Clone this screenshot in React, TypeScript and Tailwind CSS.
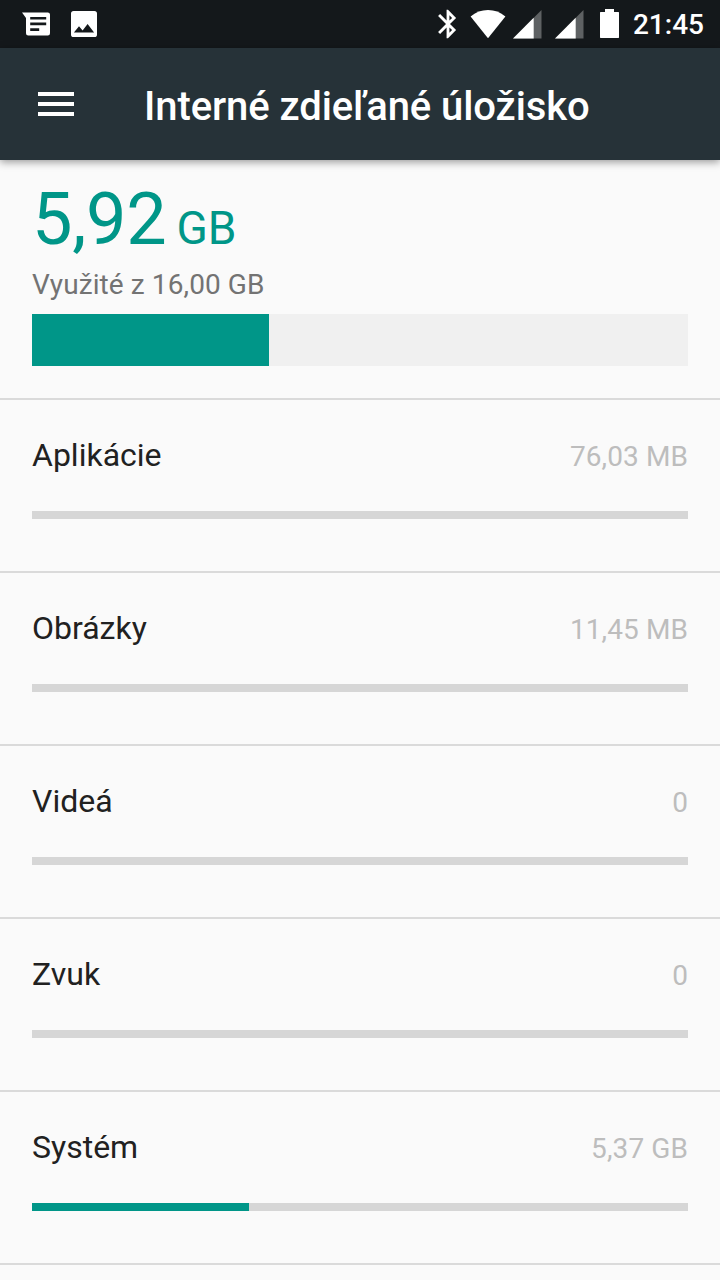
interface StorageItem {
  name: string;
  size: string;
  percent: number;
}

const storageItems: StorageItem[] = [
  { name: 'Aplikácie', size: '76,03 MB', percent: 0 },
  { name: 'Obrázky', size: '11,45 MB', percent: 0 },
  { name: 'Videá', size: '0', percent: 0 },
  { name: 'Zvuk', size: '0', percent: 0 },
  { name: 'Systém', size: '5,37 GB', percent: 33.1 },
];

function MessageIcon() {
  return (
    <svg width="28" height="24" viewBox="0 0 28 24" className="mt-3 shrink-0">
      <path
        fill="#fff"
        fillRule="evenodd"
        d="M0 .6h25.6A2.3 2.3 0 0 1 28 3v18.2a2.3 2.3 0 0 1-2.4 2.3H6.4A2.3 2.3 0 0 1 4 21.2V6zM8.200 4.900v2.700h16V4.900zM8.200 10.600v2.700h16v-2.700zM8.200 16.200v2.700h9v-2.700z"
      />
    </svg>
  );
}

function ImageIcon() {
  return (
    <svg width="26" height="26" viewBox="0 0 26 26" className="mt-[11px] ml-[21px] shrink-0">
      <path
        fill="#fff"
        fillRule="evenodd"
        d="M2.600 0h20.800A2.600 2.600 0 0 1 26 2.600v20.800a2.600 2.600 0 0 1-2.600 2.600H2.600A2.600 2.600 0 0 1 0 23.400V2.600A2.600 2.600 0 0 1 2.600 0zM2.900 21.500h20.200L16.600 13l-5 6.500L8 15.200z"
      />
    </svg>
  );
}

function BluetoothIcon() {
  return (
    <svg width="34" height="34" viewBox="0 0 24 24" className="mt-[7px] shrink-0">
      <path
        fill="#fff"
        d="M17.710 7.710L12 2h-1v7.590L6.410 5 5 6.410 10.590 12 5 17.590 6.410 19 11 14.410V22h1l5.710-5.710-4.300-4.290 4.300-4.290zM13 5.830l1.880 1.880L13 9.590V5.830zm1.880 10.460L13 18.170v-3.760l1.880 1.880z"
      />
    </svg>
  );
}

function WifiIcon() {
  return (
    <svg width="36" height="29" viewBox="0 0 36 29" className="mt-[10px] ml-[5px] shrink-0">
      <path fill="#fff" d="M18 28.200L.6 6.400C5.500 2.200 11.500 0 18 0s12.500 2.200 17.400 6.400z" />
    </svg>
  );
}

function SignalIcon() {
  return (
    <svg width="29" height="29" viewBox="0 0 29 29" className="mt-[10px] shrink-0">
      <path fill="#5e6163" d="M28.500 0v28.500H0z" />
      <path fill="#fff" d="M20.700 7.800v20.700H0z" />
    </svg>
  );
}

function BatteryIcon() {
  return (
    <svg width="19" height="29" viewBox="0 0 19 29" className="mt-[9px] ml-4 shrink-0">
      <path fill="#fff" d="M5 0h9v3h4.500l.5.500v25l-.500.500H.500L0 28.500v-25L.500 3H5z" />
    </svg>
  );
}

function StorageRow({ item }: { item: StorageItem }) {
  return (
    <div className="h-[173px] border-b-2 border-[#dadada] px-8 pt-9">
      <div className="flex h-[38px] items-baseline justify-between">
        <span className="text-[32px] leading-[38px] text-[#212121]">{item.name}</span>
        <span className="text-[28px] leading-[38px] tracking-[0.1px] text-[#bdbdbd]">{item.size}</span>
      </div>
      <div className="mt-[37px] h-2 bg-[#d6d6d6]">
        <div className="h-full bg-[#009688]" style={{ width: `${item.percent}%` }} />
      </div>
    </div>
  );
}

export default function App() {
  return (
    <div className="h-[1280px] w-[720px] overflow-hidden bg-[#fafafa] font-['Roboto',sans-serif]">
      {/* Status bar */}
      <div className="flex h-12 items-start justify-between bg-[#14181b] pr-4 pl-[22px]">
        <div className="flex">
          <MessageIcon />
          <ImageIcon />
        </div>
        <div className="flex">
          <BluetoothIcon />
          <WifiIcon />
          <div className="ml-[7px] flex gap-[13px]">
            <SignalIcon />
            <SignalIcon />
          </div>
          <BatteryIcon />
          <span className="ml-[14px] pt-2 text-[28px] leading-[34px] font-medium text-white">21:45</span>
        </div>
      </div>

      {/* Toolbar */}
      <header className="relative flex h-28 items-center bg-[#263238] pl-[38px] shadow-[0_2px_8px_rgba(0,0,0,0.4)]">
        <button className="flex w-9 flex-col gap-1.5" aria-label="Menu">
          <span className="h-1 w-full bg-white" />
          <span className="h-1 w-full bg-white" />
          <span className="h-1 w-full bg-white" />
        </button>
        <h1 className="mt-1.5 ml-[70px] text-[40px] leading-[48px] font-medium tracking-[-0.08px] whitespace-nowrap text-white">
          Interné zdieľané úložisko
        </h1>
      </header>

      {/* Usage summary */}
      <section className="h-60 border-b-2 border-[#dadada] px-8 pt-[18px]">
        <div className="h-[86px] leading-[84px] whitespace-nowrap text-[#009688]">
          <span className="text-[72px] tracking-[-0.3px]">5,92</span>
          <span className="ml-[10px] text-[46px]">GB</span>
        </div>
        <p className="h-[34px] text-[28px] leading-[42px] tracking-[0.1px] text-[#737373]">Využité z 16,00 GB</p>
        <div className="mt-4 h-[52px] bg-[#f0f0f0]">
          <div className="h-full w-[237px] bg-[#009688]" />
        </div>
      </section>

      {/* Storage categories */}
      {storageItems.map((item) => (
        <StorageRow key={item.name} item={item} />
      ))}
    </div>
  );
}
